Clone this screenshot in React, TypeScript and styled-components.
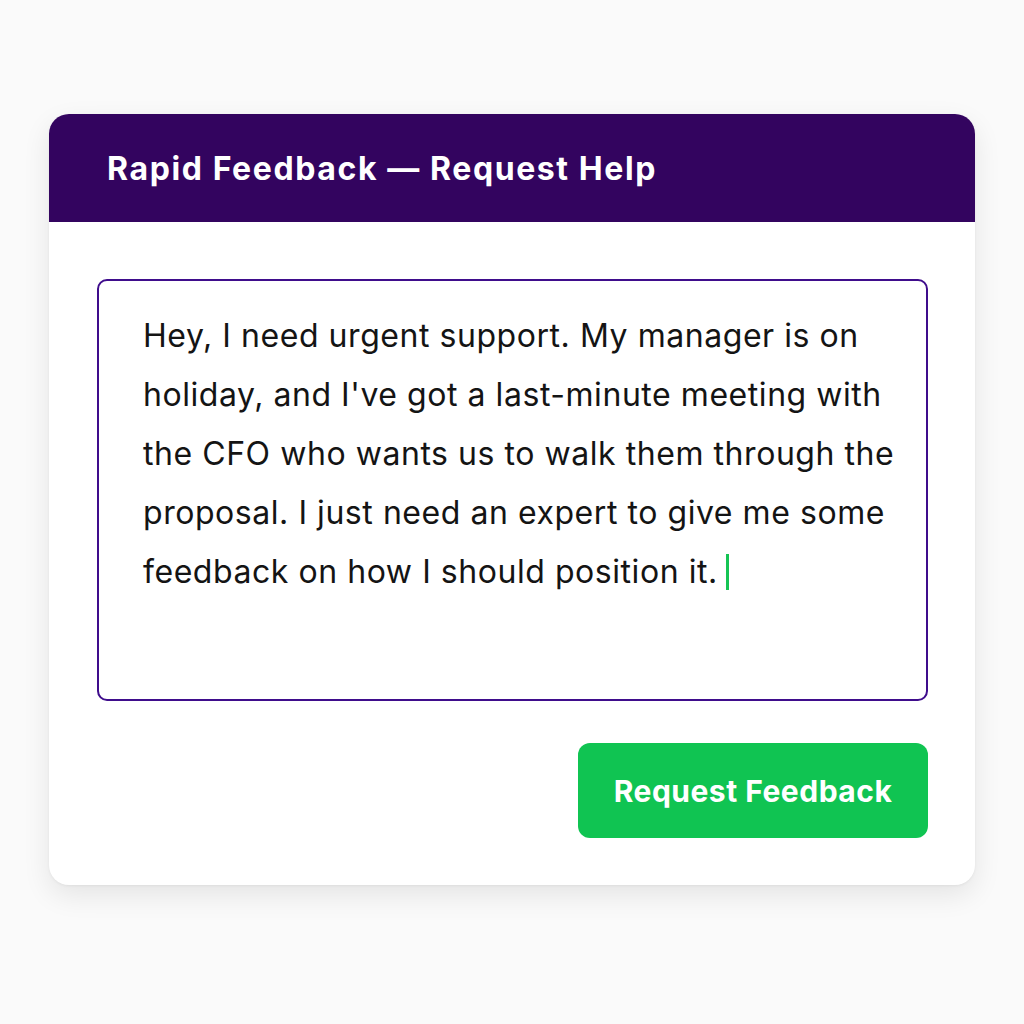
import React from "react";
import styled, { createGlobalStyle } from "styled-components";

const GlobalStyle = createGlobalStyle`
  html, body {
    margin: 0;
    padding: 0;
    background: #fafafa;
  }
  body {
    font-family: "Inter", "Noto Sans", sans-serif;
  }
`;

const Page = styled.div`
  width: 1024px;
  height: 1024px;
  padding: 114px 49px 0;
  box-sizing: border-box;
`;

const Card = styled.div`
  width: 926px;
  height: 771px;
  background: #ffffff;
  border-radius: 20px;
  overflow: hidden;
  box-shadow: 0 10px 28px rgba(0, 0, 0, 0.09), 0 1px 3px rgba(0, 0, 0, 0.05);
  display: flex;
  flex-direction: column;
`;

const Header = styled.div`
  height: 108px;
  background: #33045f;
  display: flex;
  align-items: center;
  padding: 0 58px;
  color: #ffffff;
  font-size: 32px;
  font-weight: 700;
  letter-spacing: 1.6px;
`;

const Body = styled.div`
  padding: 57px 47px 47px 48px;
  display: flex;
  flex-direction: column;
  gap: 42px;
`;

const MessageBox = styled.div`
  height: 422px;
  box-sizing: border-box;
  border: 2px solid #3f0d8c;
  border-radius: 10px;
  padding: 25px 20px 0 44px;
  font-size: 32px;
  line-height: 59px;
  letter-spacing: 0.55px;
  color: #141414;
  white-space: nowrap;
`;

const Line = styled.div``;

const Caret = styled.span`
  display: inline-block;
  width: 3px;
  height: 36px;
  background: #15c454;
  vertical-align: -7px;
  margin-left: 8px;
`;

const Actions = styled.div`
  display: flex;
  justify-content: flex-end;
`;

const PrimaryButton = styled.button`
  width: 350px;
  height: 95px;
  border: none;
  border-radius: 12px;
  background: #10c452;
  color: #ffffff;
  font-family: inherit;
  font-size: 30px;
  font-weight: 700;
  letter-spacing: 0.5px;
  padding: 0;
  cursor: pointer;
`;

const lines = [
  "Hey, I need urgent support. My manager is on",
  "holiday, and I've got a last-minute meeting with",
  "the CFO who wants us to walk them through the",
  "proposal. I just need an expert to give me some",
];

const App = () => {
  return (
    <>
      <GlobalStyle />
      <Page>
        <Card>
          <Header>Rapid Feedback — Request Help</Header>
          <Body>
            <MessageBox>
              {lines.map((l) => (
                <Line key={l}>{l}</Line>
              ))}
              <Line>
                feedback on how I should position it.
                <Caret />
              </Line>
            </MessageBox>
            <Actions>
              <PrimaryButton>Request Feedback</PrimaryButton>
            </Actions>
          </Body>
        </Card>
      </Page>
    </>
  );
};

export default App;
